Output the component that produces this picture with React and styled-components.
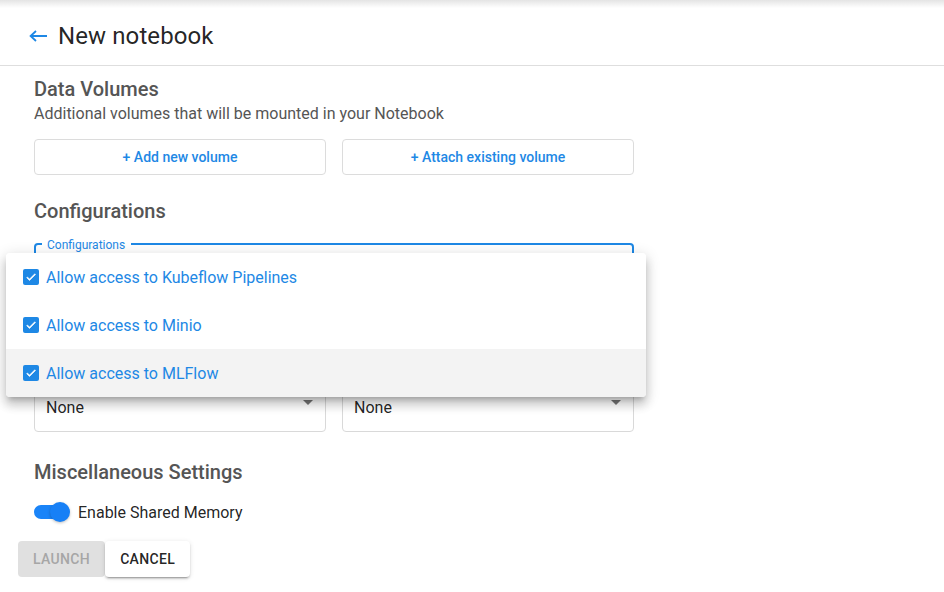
import React from "react";
import styled, { createGlobalStyle } from "styled-components";

const Global = createGlobalStyle`
  html, body { margin: 0; padding: 0; background: #fff; }
  body { font-family: Roboto, "Noto Sans", Arial, sans-serif; }
  * { box-sizing: border-box; }
`;

const BLUE = "#1e88e5";

const Page = styled.div`
  width: 944px;
  height: 592px;
  overflow: hidden;
  position: relative;
  background: #fff;
`;

const TopShade = styled.div`
  height: 8px;
  background: linear-gradient(#e4e4e4, #ffffff);
`;

const Header = styled.header`
  height: 58px;
  display: flex;
  align-items: center;
  gap: 10px;
  padding: 0 0 2px 29px;
  border-bottom: 1px solid #dedede;
`;

const BackButton = styled.button`
  border: 0;
  background: none;
  padding: 0;
  display: flex;
  align-items: center;
  cursor: pointer;
`;

const Title = styled.h1`
  margin: 0;
  font-size: 24px;
  font-weight: 400;
  color: rgba(0, 0, 0, 0.87);
  letter-spacing: 0.1px;
`;

const Body = styled.main`
  width: 634px;
  padding: 11px 0 0 34px;
  display: flex;
  flex-direction: column;
`;

const SectionTitle = styled.h2`
  margin: 0;
  height: 24px;
  line-height: 24px;
  font-size: 20px;
  font-weight: 500;
  color: #555;
`;

const Subtitle = styled.p`
  margin: 2px 0 0;
  font-size: 16px;
  line-height: 22px;
  color: #555;
`;

const ButtonRow = styled.div`
  display: grid;
  grid-template-columns: 1fr 1fr;
  gap: 16px;
  margin-top: ${(p) => p.$mt || 0}px;
`;

const OutlineButton = styled.button`
  height: 36px;
  border: 1px solid #dcdcdc;
  border-radius: 4px;
  background: #fff;
  color: ${BLUE};
  font-family: inherit;
  font-size: 14px;
  font-weight: 500;
  letter-spacing: 0;
`;

const Spacer = styled.div`
  height: ${(p) => p.$h}px;
`;

const FieldWrap = styled.div`
  position: relative;
`;

const Field = styled.div`
  position: relative;
  height: 56px;
  border: ${(p) => (p.$focused ? `2px solid ${BLUE}` : "1px solid #d9d9d9")};
  border-radius: 4px;
  display: flex;
  align-items: center;
  padding: 6px 12px 0 11px;
  font-size: 16px;
  color: rgba(0, 0, 0, 0.87);
`;

const FieldLabel = styled.span`
  position: absolute;
  top: -7px;
  left: 6px;
  padding: 0 6px 0 5px;
  background: #fff;
  font-size: 12px;
  line-height: 14px;
  color: ${BLUE};
`;

const Arrow = styled.span`
  margin-left: auto;
  margin-top: -10px;
  width: 0;
  height: 0;
  border-left: 5px solid transparent;
  border-right: 5px solid transparent;
  border-top: 5px solid #757575;
`;

const Menu = styled.ul`
  position: absolute;
  left: -28px;
  top: 10px;
  width: 640px;
  margin: 0;
  padding: 0;
  list-style: none;
  background: #fff;
  border-radius: 4px;
  box-shadow: 0 5px 5px -3px rgba(0, 0, 0, 0.2), 0 8px 10px 1px rgba(0, 0, 0, 0.14),
    0 3px 14px 2px rgba(0, 0, 0, 0.12);
  z-index: 5;
  overflow: hidden;
`;

const MenuItem = styled.li`
  height: 48px;
  display: flex;
  align-items: center;
  gap: 7px;
  padding-left: 17px;
  background: ${(p) => (p.$active ? "#f3f3f3" : "#fff")};
  font-size: 16px;
  color: ${BLUE};
`;

const Check = styled.span`
  width: 16px;
  height: 16px;
  border-radius: 2px;
  background: ${BLUE};
  display: flex;
  align-items: center;
  justify-content: center;
`;

const ToggleRow = styled.label`
  display: flex;
  align-items: center;
  gap: 8px;
  margin-top: 18px;
  font-size: 16px;
  color: rgba(0, 0, 0, 0.87);
`;

const Toggle = styled.span`
  position: relative;
  width: 36px;
  height: 20px;
  display: flex;
  align-items: center;
`;

const Track = styled.span`
  width: 34px;
  height: 14px;
  border-radius: 7px;
  background: #1a84f8;
`;

const Thumb = styled.span`
  position: absolute;
  right: 0;
  top: 0;
  width: 20px;
  height: 20px;
  border-radius: 50%;
  background: #1780f6;
  box-shadow: 0 1px 3px rgba(0, 0, 0, 0.25);
`;

const Footer = styled.div`
  display: flex;
  padding: 19px 0 0 18px;
`;

const ActionButton = styled.button`
  height: 36px;
  padding: 0 15px;
  border: 0;
  border-radius: 4px;
  font-family: inherit;
  font-size: 14px;
  font-weight: 500;
  letter-spacing: 0.35px;
  background: ${(p) => (p.$disabled ? "#e0e0e0" : "#fff")};
  color: ${(p) => (p.$disabled ? "#a6a6a6" : "rgba(0,0,0,0.87)")};
  box-shadow: ${(p) =>
    p.$disabled
      ? "none"
      : "0 3px 1px -2px rgba(0,0,0,0.2), 0 2px 2px 0 rgba(0,0,0,0.14), 0 1px 5px 0 rgba(0,0,0,0.12)"};
`;

const options = [
  "Allow access to Kubeflow Pipelines",
  "Allow access to Minio",
  "Allow access to MLFlow",
];

export default function App() {
  return (
    <Page>
      <Global />
      <TopShade />
      <Header>
        <BackButton aria-label="back">
          <svg width="19" height="12" viewBox="0 0 19 12">
            <path d="M18 6H1.8M7 1L1.6 6L7 11" fill="none" stroke={BLUE} strokeWidth="1.8" />
          </svg>
        </BackButton>
        <Title>New notebook</Title>
      </Header>
      <Body>
        <SectionTitle>Data Volumes</SectionTitle>
        <Subtitle>Additional volumes that will be mounted in your Notebook</Subtitle>
        <ButtonRow $mt={14}>
          <OutlineButton>+ Add new volume</OutlineButton>
          <OutlineButton>+ Attach existing volume</OutlineButton>
        </ButtonRow>
        <Spacer $h={24} />
        <SectionTitle>Configurations</SectionTitle>
        <Spacer $h={20} />
        <FieldWrap>
          <Field $focused>
            <FieldLabel>Configurations</FieldLabel>
          </Field>
          <Menu>
            {options.map((o, i) => (
              <MenuItem key={o} $active={i === 2}>
                <Check>
                  <svg width="12" height="12" viewBox="0 0 24 24">
                    <path d="M9 16.17 4.83 12l-1.42 1.41L9 19 21 7l-1.41-1.41z" fill="#fff" stroke="#fff" strokeWidth="1.2" />
                  </svg>
                </Check>
                {o}
              </MenuItem>
            ))}
          </Menu>
        </FieldWrap>
        <ButtonRow $mt={77}>
          <Field>
            None
            <Arrow />
          </Field>
          <Field>
            None
            <Arrow />
          </Field>
        </ButtonRow>
        <Spacer $h={28} />
        <SectionTitle>Miscellaneous Settings</SectionTitle>
        <ToggleRow>
          <Toggle>
            <Track />
            <Thumb />
          </Toggle>
          Enable Shared Memory
        </ToggleRow>
      </Body>
      <Footer>
        <ActionButton $disabled>LAUNCH</ActionButton>
        <ActionButton>CANCEL</ActionButton>
      </Footer>
    </Page>
  );
}
